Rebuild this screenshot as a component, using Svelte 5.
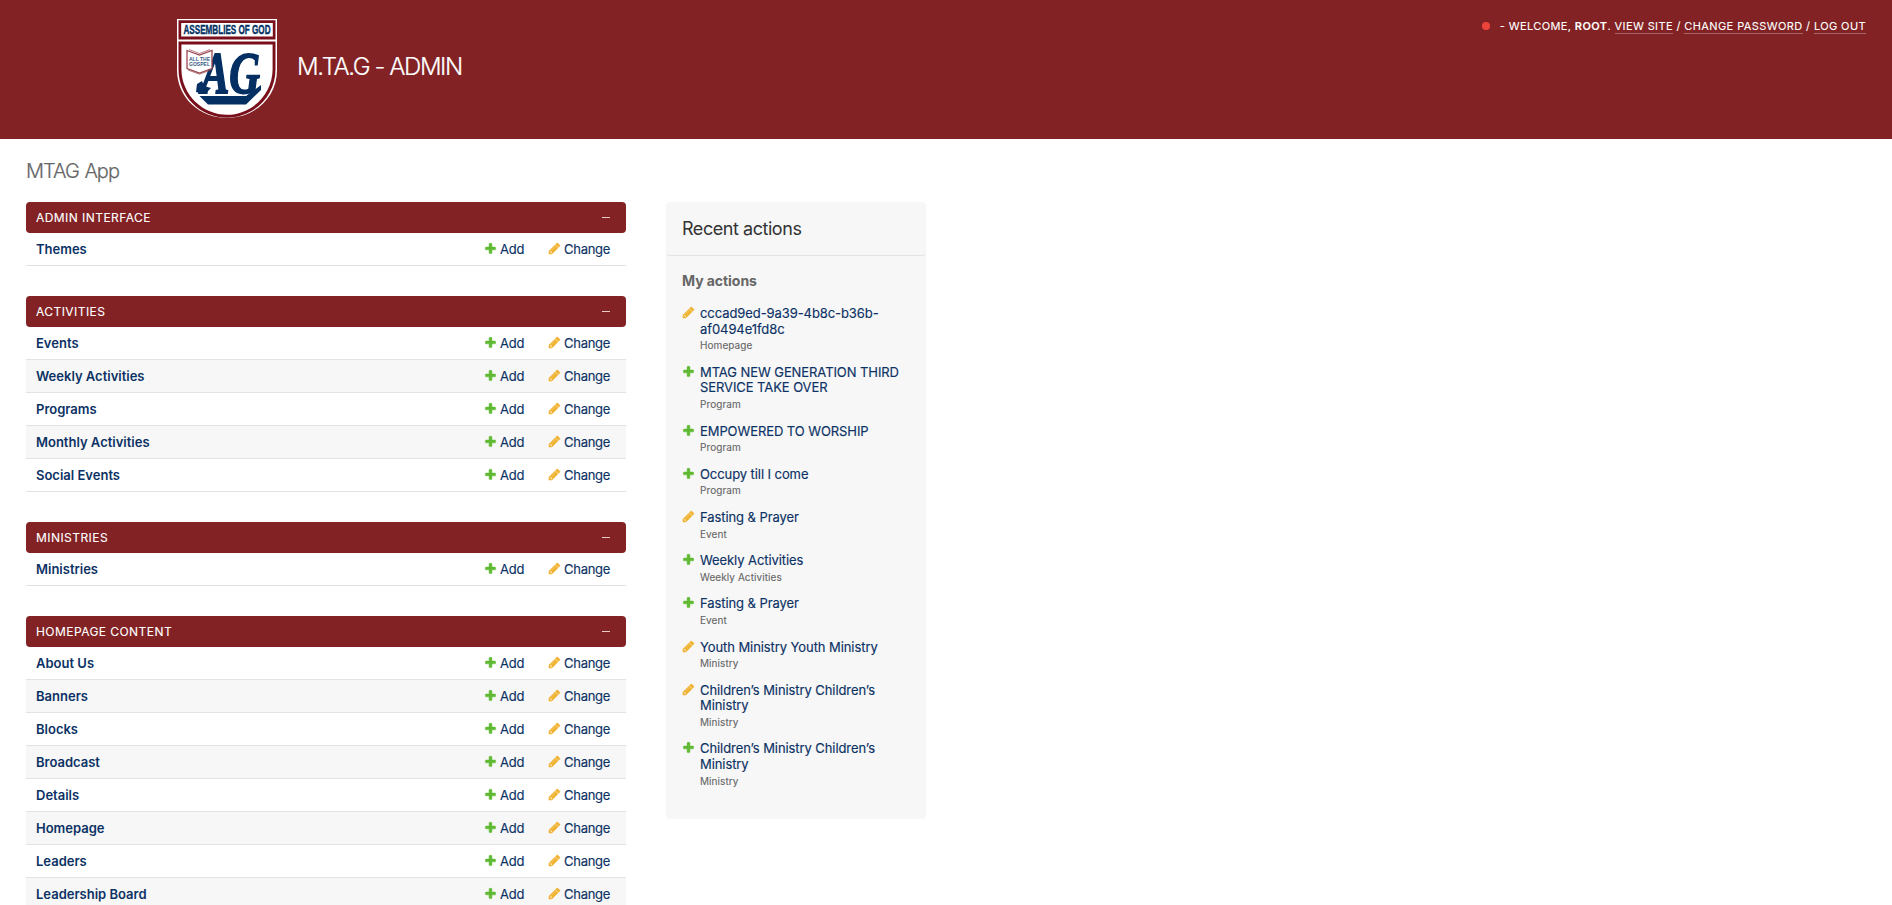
<script>
  const groups = [
    { title: 'Admin Interface', models: ['Themes'] },
    {
      title: 'Activities',
      models: ['Events', 'Weekly Activities', 'Programs', 'Monthly Activities', 'Social Events']
    },
    { title: 'Ministries', models: ['Ministries'] },
    {
      title: 'Homepage Content',
      models: ['About Us', 'Banners', 'Blocks', 'Broadcast', 'Details', 'Homepage', 'Leaders', 'Leadership Board']
    }
  ];
  const actions = [
    { type: 'change', lines: ['cccad9ed-9a39-4b8c-b36b-', 'af0494e1fd8c'], kind: 'Homepage' },
    { type: 'add', lines: ['MTAG NEW GENERATION THIRD', 'SERVICE TAKE OVER'], kind: 'Program' },
    { type: 'add', lines: ['EMPOWERED TO WORSHIP'], kind: 'Program' },
    { type: 'add', lines: ['Occupy till I come'], kind: 'Program' },
    { type: 'change', lines: ['Fasting & Prayer'], kind: 'Event' },
    { type: 'add', lines: ['Weekly Activities'], kind: 'Weekly Activities' },
    { type: 'add', lines: ['Fasting & Prayer'], kind: 'Event' },
    { type: 'change', lines: ['Youth Ministry Youth Ministry'], kind: 'Ministry' },
    { type: 'change', lines: ['Children’s Ministry Children’s', 'Ministry'], kind: 'Ministry' },
    { type: 'add', lines: ['Children’s Ministry Children’s', 'Ministry'], kind: 'Ministry' }
  ];
</script>

{#snippet icon(type)}
  <svg class="icon" width="13" height="13" viewBox="0 0 1792 1792" aria-hidden="true">
    {#if type === 'add'}
      <path fill="#5fb932" stroke="#5fb932" stroke-width="70" d="M1600 796v192q0 40-28 68t-68 28h-416v416q0 40-28 68t-68 28h-192q-40 0-68-28t-28-68v-416h-416q-40 0-68-28t-28-68v-192q0-40 28-68t68-28h416v-416q0-40 28-68t68-28h192q40 0 68 28t28 68v416h416q40 0 68 28t28 68z" />
    {:else}
      <path fill="#f0b331" stroke="#f0b331" stroke-width="60" d="M491 1536l91-91-235-235-91 91v107h128v128h107zm523-928q0-22-22-22-10 0-17 7l-542 542q-7 7-7 17 0 22 22 22 10 0 17-7l542-542q7-7 7-17zm-54-192l416 416-832 832h-416v-416zm683 96q0 53-37 90l-166 166-416-416 166-165q36-38 90-38 53 0 91 38l235 234q37 39 37 91z" />
    {/if}
  </svg>
{/snippet}

<header>
  <div class="brand">
    <svg class="logo" width="100" height="100" viewBox="0 0 100 100">
      <path fill="#fff" d="M0 0H100V51C100 79 77 99 50 99S0 79 0 51Z" />
      <path fill="#780f1b" d="M1.5 1.2H98.5V20.5H1.5Z" />
      <path fill="#fff" d="M4.2 4H95.8V17.6H4.2Z" />
      <path fill="#780f1b" d="M1.5 22.5H98.5V50C98.5 78 76 98.7 50 98.7S1.5 78 1.5 50Z" />
      <path fill="#fff" d="M4.4 25.5H95.6V50C95.6 76 74 95.8 50 95.8S4.4 76 4.4 50Z" />
      <text class="banner" x="6.5" y="15.2" textLength="87" lengthAdjust="spacingAndGlyphs">ASSEMBLIES OF GOD</text>
      <g transform="translate(24 74)">
        <text class="mono" x="0" y="0" textLength="59" lengthAdjust="spacingAndGlyphs">AG</text>
      </g>
      <path fill="#fff" stroke="#9b4650" stroke-width="1.3" d="M10 31.5L22.5 36L35 31.5V49.5L22.5 54L10 49.5Z" />
      <path fill="none" stroke="#9b4650" stroke-width=".7" d="M12 30.5L22.5 34.5L33 30.5M11 51L22.5 55.2L34 51" />
      <text class="tiny" x="12" y="41.7" textLength="21" lengthAdjust="spacingAndGlyphs">ALL THE</text>
      <text class="tiny" x="12" y="46.8" textLength="21" lengthAdjust="spacingAndGlyphs">GOSPEL</text>
      <path fill="#032f63" d="M22.5 77H69L84 66V71L69 85.5H31Z" />
      <path fill="#032f63" d="M19 73L20 65L25 62L27 67L34 69L28 75Z" />
    </svg>
    <h1>M.TA.G - ADMIN</h1>
  </div>
  <div class="tools">
    <span class="dot"></span><span class="welcome">- Welcome, <strong>root</strong>. <a>View site</a> / <a>Change password</a> / <a>Log out</a></span>
  </div>
</header>

<main>
  <h2 class="page-title">MTAG App</h2>
  <div class="columns">
    <div class="modules">
      {#each groups as group}
        <section class="module">
          <div class="caption"><span>{group.title}</span><i></i></div>
          {#each group.models as model}
            <div class="row">
              <a class="name">{model}</a>
              <a class="link add">{@render icon('add')}<span>Add</span></a>
              <a class="link change">{@render icon('change')}<span>Change</span></a>
            </div>
          {/each}
        </section>
      {/each}
    </div>
    <aside>
      <h2>Recent actions</h2>
      <h3>My actions</h3>
      <ul>
        {#each actions as action}
          <li>
            {@render icon(action.type)}
            <div>
              <a class="title">{#each action.lines as line}<span>{line}</span>{/each}</a>
              <span class="kind">{action.kind}</span>
            </div>
          </li>
        {/each}
      </ul>
    </aside>
  </div>
</main>

<style>
  :global(html) { overflow: hidden; }
  :global(body) { margin: 0; height: 905px; overflow: hidden; background: #fff; }
  :global(#app) { font-family: Inter, "Liberation Sans", sans-serif; font-size: 13px; color: #333; }
  h1, h2, h3, ul { margin: 0; padding: 0; }
  header {
    box-sizing: border-box; height: 139px; padding: 19px 26px 0 176.5px; background: #822224; color: #fff;
    display: flex; justify-content: space-between; align-items: flex-start;
  }
  .brand { display: flex; align-items: flex-start; gap: 20.5px; }
  .logo { display: block; overflow: visible; }
  .banner { font: bold 12.5px "Liberation Sans", sans-serif; fill: #032f63; stroke: #032f63; stroke-width: .4px; }
  .tiny { font: bold 5.5px "Liberation Sans", sans-serif; fill: #355a84; }
  .mono { font: italic bold 60px "Liberation Serif", serif; fill: #032f63; stroke: #032f63; stroke-width: 1.8px; }
  h1 { margin-top: 33px; font-size: 24px; line-height: 30px; font-weight: 300; letter-spacing: -1.4px; white-space: nowrap; -webkit-text-stroke: .2px #fff; }
  .tools { display: flex; align-items: center; font-size: 11px; line-height: 14px; text-transform: uppercase; letter-spacing: .4px; font-weight: 400; white-space: nowrap; -webkit-text-stroke: .1px #fff; }
  .dot { width: 8px; height: 8px; border-radius: 50%; background: #ee443b; margin-right: 10px; }
  .tools strong { font-weight: 600; }
  .tools a { border-bottom: 1px solid #a86466; }
  main { padding: 20px 26px 0; }
  .page-title { height: 43px; font-size: 20px; line-height: 25px; font-weight: 300; color: #666; letter-spacing: -1px; word-spacing: 1px; -webkit-text-stroke: .2px #666; }
  .columns { display: flex; align-items: flex-start; gap: 40px; }
  .modules { width: 600px; display: flex; flex-direction: column; gap: 30px; }
  .caption {
    box-sizing: border-box; height: 31px; padding: 0 16px 0 10px; border-radius: 4px; background: #822224; color: #fff;
    display: flex; align-items: center; justify-content: space-between;
    font-size: 12px; text-transform: uppercase; letter-spacing: .44px; font-weight: 400; -webkit-text-stroke: .1px #fff;
  }
  .caption i { width: 8px; height: 1px; background: #e3cccc; }
  .row {
    box-sizing: border-box; height: 33px; padding: 0 16px 0 10px; border-bottom: 1px solid #e3e3e3;
    display: flex; align-items: center; color: #0c3265;
  }
  .row:nth-child(odd) { background: #f7f7f7; }
  .name { flex: 1; font-weight: 600; }
  .link { display: flex; align-items: center; gap: 3px; font-weight: 400; letter-spacing: -.26px; -webkit-text-stroke: .15px #0c3265; }
  .add { width: 64px; }
  .change { width: 62px; white-space: nowrap; }
  .icon { display: block; flex: none; }
  .link .icon { margin-top: -1px; }
  aside { box-sizing: border-box; width: 260px; height: 617px; background: #f7f7f7; border-radius: 4px; }
  aside h2 {
    box-sizing: border-box; height: 54px; padding: 0 16px; border-bottom: 1px solid #e3e3e3; border-radius: 4px;
    font-size: 18px; line-height: 53px; font-weight: 400; letter-spacing: -.45px;
  }
  aside h3 { padding: 16px 16px 0; font-size: 14px; line-height: 18px; font-weight: 650; color: #666; letter-spacing: -.05px; }
  ul { list-style: none; padding: 16px 0 0 16px; }
  li { display: flex; gap: 5px; padding-bottom: 11px; }
  .title { display: block; color: #0c3265; line-height: 15.6px; font-weight: 400; letter-spacing: -.08px; -webkit-text-stroke: .15px #0c3265; }
  .title span { display: block; white-space: nowrap; }
  .kind { display: block; padding-top: 1px; font-size: 10px; line-height: 15.6px; color: #666; letter-spacing: .07px; -webkit-text-stroke: .1px #666; }
</style>
